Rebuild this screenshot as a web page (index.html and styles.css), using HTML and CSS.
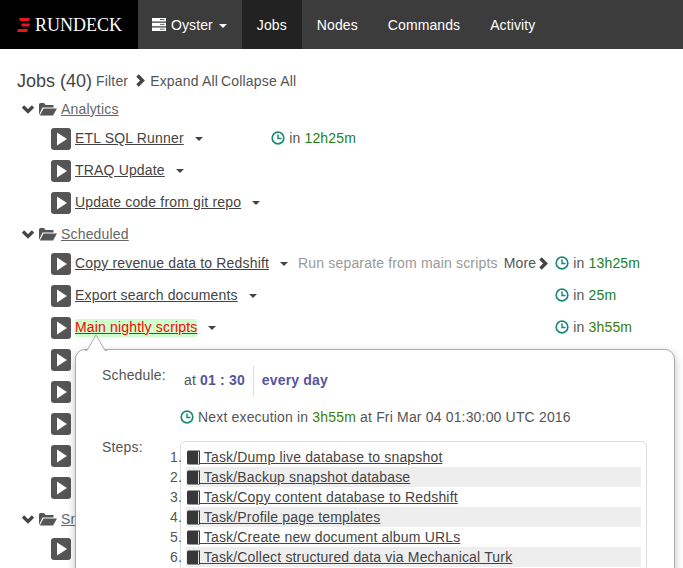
FILE: index.html
```html
<!DOCTYPE html>
<html lang="en">
<head>
    <meta charset="UTF-8">
    <title>Jobs - Rundeck</title>
    <link rel="stylesheet" href="styles.css">
</head>
<body>

    <!-- Shared icons -->
    <svg class="icon-defs" aria-hidden="true">
        <symbol id="i-down" viewBox="0 0 14 9"><path d="M2 1.500 7 6.500 12 1.500" fill="none" stroke="currentColor" stroke-width="3.200"/></symbol>
        <symbol id="i-right" viewBox="0 0 10 13"><path d="M2.500 1.500 7.500 6.500 2.500 11.500" fill="none" stroke="currentColor" stroke-width="3.400"/></symbol>
        <symbol id="i-folder" viewBox="0 0 18 14"><path d="M0 13V2.500Q0 1 1.500 1H5L6.500 3H14.500V5.500H3.500L0 13Z"/><path d="M4.500 6.500H18L14 13.500H.8Z"/></symbol>
        <symbol id="i-clock" viewBox="0 0 14 14"><circle cx="7" cy="7" r="5.800" fill="none" stroke="currentColor" stroke-width="1.700"/><path d="M7 3.500V7.500H10.500" fill="none" stroke="currentColor" stroke-width="1.500"/></symbol>
        <symbol id="i-play" viewBox="0 0 20 22"><rect width="20" height="22" rx="3" fill="#555"/><path d="M6 4.500 16 11 6 17.500Z" fill="#fff"/></symbol>
        <symbol id="i-book" viewBox="0 0 13 15"><path d="M0 2Q0 .5 1.500 .5H13V14.500H1.500Q0 14.500 0 13Z" fill="#383838"/><path d="M11 1.500H12V14H11Z" fill="#ddd"/></symbol>
    </svg>

    <!-- Top navigation -->
    <nav class="navbar">
        <a class="brand">
            <svg class="brand-mark" viewBox="0 0 13 14"><path d="M2 0H13L12 3H3ZM4.500 5.500H13L12 8.500H4.500ZM1 11H11L10 14H0Z" fill="#e8141c"/></svg>
            RUNDECK
        </a>
        <a class="nav-item project">
            <svg class="hdd" viewBox="0 0 14 13"><path d="M0 0H14V3.500H0ZM0 4.700H14V8.200H0ZM0 9.400H14V13H0Z" fill="#fff"/><path d="M8 1.500H12.500M8 6.400H12.500M8 11.200H12.500" stroke="#666" stroke-width="1"/></svg>
            Oyster <span class="caret caret-light"></span>
        </a>
        <a class="nav-item active">Jobs</a>
        <a class="nav-item">Nodes</a>
        <a class="nav-item">Commands</a>
        <a class="nav-item">Activity</a>
    </nav>

    <main class="content">
        <div class="page-title">
            <span class="title-jobs">Jobs (40)</span>
            <span class="title-link">Filter</span>
            <svg class="chev-right"><use href="#i-right"/></svg>
            <span class="title-link">Expand All</span>
            <span class="title-link">Collapse All</span>
        </div>

        <section class="group">
            <div class="group-head">
                <svg class="chev-down"><use href="#i-down"/></svg>
                <svg class="folder"><use href="#i-folder"/></svg>
                <a class="group-name">Analytics</a>
            </div>
            <table class="jobs">
                <tr>
                    <td class="job-main"><svg class="play"><use href="#i-play"/></svg><a class="job-name">ETL SQL Runner</a><span class="caret"></span></td>
                    <td class="job-next"><svg class="clock"><use href="#i-clock"/></svg>in <span class="t-green">12h25m</span></td>
                </tr>
                <tr>
                    <td class="job-main"><svg class="play"><use href="#i-play"/></svg><a class="job-name">TRAQ Update</a><span class="caret"></span></td>
                    <td></td>
                </tr>
                <tr>
                    <td class="job-main"><svg class="play"><use href="#i-play"/></svg><a class="job-name">Update code from git repo</a><span class="caret"></span></td>
                    <td></td>
                </tr>
            </table>
        </section>

        <section class="group">
            <div class="group-head">
                <svg class="chev-down"><use href="#i-down"/></svg>
                <svg class="folder"><use href="#i-folder"/></svg>
                <a class="group-name">Scheduled</a>
            </div>
            <table class="jobs">
                <tr>
                    <td class="job-main">
                        <svg class="play"><use href="#i-play"/></svg><a class="job-name">Copy revenue data to Redshift</a><span class="caret"></span><span class="job-desc">Run separate from main scripts</span><span class="more">More</span><svg class="chev-right more-chev"><use href="#i-right"/></svg>
                    </td>
                    <td class="job-next"><svg class="clock"><use href="#i-clock"/></svg>in <span class="t-green">13h25m</span></td>
                </tr>
                <tr>
                    <td class="job-main"><svg class="play"><use href="#i-play"/></svg><a class="job-name">Export search documents</a><span class="caret"></span></td>
                    <td class="job-next"><svg class="clock"><use href="#i-clock"/></svg>in <span class="t-green">25m</span></td>
                </tr>
                <tr>
                    <td class="job-main"><svg class="play"><use href="#i-play"/></svg><a class="job-name job-hover">Main nightly scripts</a><span class="caret"></span></td>
                    <td class="job-next"><svg class="clock"><use href="#i-clock"/></svg>in <span class="t-olive">3h55m</span></td>
                </tr>
                <tr><td class="job-main"><svg class="play"><use href="#i-play"/></svg></td><td></td></tr>
                <tr><td class="job-main"><svg class="play"><use href="#i-play"/></svg></td><td></td></tr>
                <tr><td class="job-main"><svg class="play"><use href="#i-play"/></svg></td><td></td></tr>
                <tr><td class="job-main"><svg class="play"><use href="#i-play"/></svg></td><td></td></tr>
                <tr><td class="job-main"><svg class="play"><use href="#i-play"/></svg></td><td></td></tr>
            </table>
        </section>

        <section class="group">
            <div class="group-head">
                <svg class="chev-down"><use href="#i-down"/></svg>
                <svg class="folder"><use href="#i-folder"/></svg>
                <a class="group-name">Snapshots</a>
            </div>
            <table class="jobs">
                <tr><td class="job-main"><svg class="play"><use href="#i-play"/></svg></td><td></td></tr>
            </table>
        </section>
    </main>

    <!-- Job detail popover -->
    <aside class="popover">
        <svg class="popover-arrow" viewBox="0 0 24 17"><path d="M1 16.500H3L12 1 21 16.500H23" fill="#fff" stroke="#aaa"/></svg>
        <div class="pop-label">Schedule:</div>
        <div class="schedule">
            <span class="sched-time">at <b>01 : 30</b></span>
            <span class="sched-days"><b>every day</b></span>
        </div>
        <div class="next-run">
            <svg class="clock"><use href="#i-clock"/></svg>Next execution in <span class="t-olive">3h55m</span> at Fri Mar 04 01:30:00 UTC 2016
        </div>
        <div class="pop-label steps-label">Steps:</div>
        <ol class="steps">
            <li><a><svg class="book"><use href="#i-book"/></svg> Task/Dump live database to snapshot</a></li>
            <li><a><svg class="book"><use href="#i-book"/></svg> Task/Backup snapshot database</a></li>
            <li><a><svg class="book"><use href="#i-book"/></svg> Task/Copy content database to Redshift</a></li>
            <li><a><svg class="book"><use href="#i-book"/></svg> Task/Profile page templates</a></li>
            <li><a><svg class="book"><use href="#i-book"/></svg> Task/Create new document album URLs</a></li>
            <li><a><svg class="book"><use href="#i-book"/></svg> Task/Collect structured data via Mechanical Turk</a></li>
        </ol>
    </aside>

</body>
</html>
```

FILE: styles.css
```css
/* General page */
html, body {
    height: 568px;
    overflow: hidden;
}

body {
    margin: 0;
    position: relative;
    font-family: "Liberation Sans", Arial, sans-serif;
    font-size: 14px;
    line-height: 20px;
    letter-spacing: 0.17px;
    color: #555;
    background-color: #fff;
}

.icon-defs {
    display: none;
}

/* Navbar */
.navbar {
    display: flex;
    height: 49px;
    background-color: #3c3c3c;
    color: #fff;
}

.brand {
    display: flex;
    align-items: center;
    width: 138px;
    box-sizing: border-box;
    padding-left: 17px;
    background-color: #000;
    font-family: "Liberation Serif", serif;
    font-size: 18px;
    letter-spacing: 0;
}

.brand-mark {
    width: 13px;
    height: 14px;
    margin-right: 5px;
}

.nav-item {
    display: flex;
    align-items: center;
    padding: 0 15px;
    letter-spacing: 0.1px;
}

.nav-item.active {
    background-color: #222;
}

.project {
    padding: 0 15px 0 14px;
}

.hdd {
    width: 14px;
    height: 13px;
    margin-right: 5px;
}

.caret {
    display: inline-block;
    width: 0;
    height: 0;
    margin: 0 4px 0 11px;
    vertical-align: middle;
    border-top: 4px solid #444;
    border-left: 4px solid transparent;
    border-right: 4px solid transparent;
}

.caret-light {
    margin: 2px 0 0 6px;
    border-top-color: #fff;
}

/* Job list */
.content {
    padding: 21px 0 0 17px;
}

.page-title {
    display: flex;
    align-items: center;
    height: 25px;
    padding-bottom: 4px;
    box-sizing: border-box;
}

.title-jobs {
    font-size: 18px;
    letter-spacing: 0;
    color: #444;
    margin-right: 4px;
}

.title-link {
    margin-right: 5px;
}

.chev-right + .title-link {
    margin-right: 3px;
}

.chev-right {
    width: 10px;
    height: 13px;
    color: #444;
    margin: 0 5px 0 2px;
}

.group {
    margin-bottom: 1px;
}

.group-head {
    display: flex;
    align-items: center;
    height: 28px;
    padding-left: 4px;
}

.chev-down {
    width: 14px;
    height: 9px;
    color: #444;
    margin-right: 4px;
}

.folder {
    width: 18px;
    height: 14px;
    fill: #555;
    margin-right: 4px;
}

.group-name {
    color: #666;
    text-decoration: underline;
}

.jobs {
    margin-left: 34px;
    border-collapse: collapse;
}

.jobs td {
    box-sizing: border-box;
    height: 32px;
    padding: 0;
    white-space: nowrap;
}

.job-main {
    padding-right: 7px !important;
}

.jobs .job-next {
    padding-bottom: 2px;
}

.play {
    width: 20px;
    height: 22px;
    margin-right: 4px;
    vertical-align: middle;
}

.job-name {
    color: #444;
    text-decoration: underline;
}

.job-hover {
    color: #f00;
    background-color: #cfc;
    border-radius: 3px;
    padding-bottom: 2px;
}

.job-desc {
    color: #999;
    margin-left: 6px;
}

.more {
    margin-left: 6px;
}

.more-chev {
    margin: 0 0 0 2px;
    vertical-align: -2px;
}

.clock {
    width: 14px;
    height: 14px;
    color: #1d8a78;
    margin-right: 4px;
    vertical-align: -2px;
}

.t-green {
    color: #1a8020;
}

.t-olive {
    color: #3d7d00;
}

/* Popover */
.popover {
    position: absolute;
    left: 75px;
    top: 349px;
    width: 600px;
    height: 300px;
    box-sizing: border-box;
    padding: 15px 0 0 26px;
    display: grid;
    grid-template-columns: 78px 467px;
    grid-template-rows: 32px 20px auto;
    align-content: start;
    row-gap: 10px;
    background-color: #fff;
    border: 1px solid #aaa;
    border-radius: 10px;
    box-shadow: 0 3px 8px rgba(0, 0, 0, 0.25);
}

.popover-arrow {
    position: absolute;
    left: 8px;
    top: -16px;
    width: 24px;
    height: 17px;
}

.schedule {
    display: flex;
    align-items: center;
    padding-left: 4px;
}

.schedule b {
    color: #55559f;
}

.sched-time {
    padding: 0 8px 2px 0;
    line-height: 29px;
}

.sched-days {
    padding: 0 0 2px 8px;
    border-left: 1px solid #ddd;
    line-height: 29px;
}

.next-run {
    grid-column: 2;
    white-space: nowrap;
}

.steps {
    margin: 4px 0 0;
    padding: 5px;
    border: 1px solid #ddd;
    border-radius: 5px;
    height: 300px;
}

.steps li {
    padding-left: 1px;
    height: 20px;
    white-space: nowrap;
}

.steps li:nth-child(even) {
    background-color: #eee;
}

.steps a {
    color: #444;
    text-decoration: underline;
}

.book {
    width: 13px;
    height: 15px;
    vertical-align: -3px;
}
```
